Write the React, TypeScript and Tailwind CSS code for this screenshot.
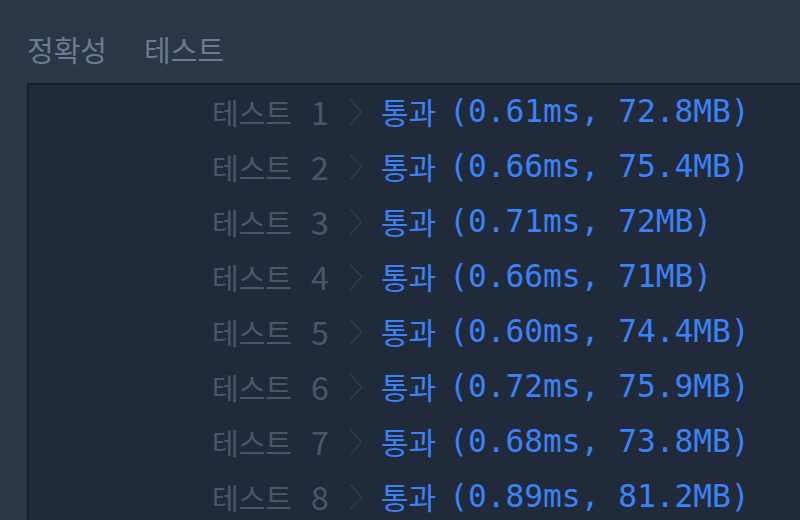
const results = [
  { n: 1, ms: '0.61', mb: '72.8' },
  { n: 2, ms: '0.66', mb: '75.4' },
  { n: 3, ms: '0.71', mb: '72' },
  { n: 4, ms: '0.66', mb: '71' },
  { n: 5, ms: '0.60', mb: '74.4' },
  { n: 6, ms: '0.72', mb: '75.9' },
  { n: 7, ms: '0.68', mb: '73.8' },
  { n: 8, ms: '0.89', mb: '81.2' },
];

function Chevron() {
  return (
    <svg width="14" height="28" viewBox="0 0 14 28" fill="none" className="shrink-0">
      <path d="M1.5 1.5 L12.5 14 L1.5 26.5" stroke="#333e4f" strokeWidth="1.3" />
    </svg>
  );
}

export default function App() {
  return (
    <div className="w-[800px] h-[520px] overflow-hidden bg-[#2b3647] font-['Noto_Sans','Noto_Sans_CJK_KR',sans-serif]">
      {/* 제목 */}
      <div className="h-[83px] flex items-center pl-[27px] pt-[18px] gap-[37px] text-[29px] text-[#6b7c8f]">
        <span>정확성</span>
        <span>테스트</span>
      </div>

      {/* 결과 목록 */}
      <div className="ml-[27px] h-full bg-[#212a3a] border-l-2 border-t-2 border-[#19212d] pl-[183px]">
        {results.map((r) => (
          <div key={r.n} className="flex items-center h-[55px] pb-[2px]">
            <div className="w-[137px] flex items-baseline text-[29px] text-[#4b5769]">
              <span>테스트</span>
              <span className="ml-[19px] text-[32px] font-['Noto_Sans_CJK_KR',sans-serif]">{r.n}</span>
            </div>
            <Chevron />
            <span className="ml-[18px] text-[30px] text-[#3b82f6] font-['Noto_Sans_CJK_KR',sans-serif]">통과</span>
            <span className="ml-[13px] text-[31.2px] text-[#3b82f6] font-['DejaVu_Sans_Mono',monospace] whitespace-pre">
              ({r.ms}ms, {r.mb}MB)
            </span>
          </div>
        ))}
      </div>
    </div>
  );
}
